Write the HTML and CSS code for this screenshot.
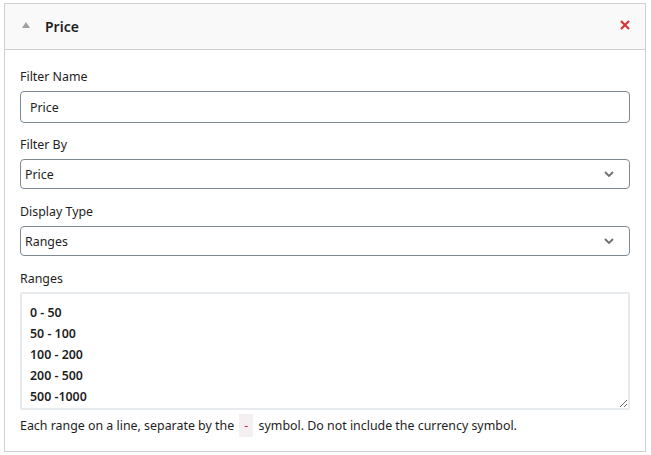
FILE: index.html
```html
<!DOCTYPE html>
<html lang="en">
<head>
    <meta charset="UTF-8">
    <title>Price filter</title>
    <link rel="stylesheet" href="styles.css">
</head>
<body>
    <div class="filter-box">
        <div class="filter-head">
            <svg class="toggle" width="8" height="6" viewBox="0 0 8 6"><path d="M4 0L8 6H0z" fill="#a0a0a0"/></svg>
            <h3>Price</h3>
            <svg class="remove" width="10" height="10" viewBox="0 0 10 10"><path d="M1 1l8 8M9 1l-8 8" stroke="#d63638" stroke-width="2.2"/></svg>
        </div>
        <div class="filter-body">
            <label class="field-label">Filter Name</label>
            <input class="text-input" type="text" value="Price">

            <label class="field-label">Filter By</label>
            <div class="select-wrap">
                <select class="select-input">
                    <option>Price</option>
                </select>
                <svg class="chevron" width="10" height="6" viewBox="0 0 10 6"><path d="M1 1l4 4 4-4" fill="none" stroke="#6b6f76" stroke-width="1.8"/></svg>
            </div>

            <label class="field-label">Display Type</label>
            <div class="select-wrap">
                <select class="select-input">
                    <option>Ranges</option>
                </select>
                <svg class="chevron" width="10" height="6" viewBox="0 0 10 6"><path d="M1 1l4 4 4-4" fill="none" stroke="#6b6f76" stroke-width="1.8"/></svg>
            </div>

            <label class="field-label ranges-label">Ranges</label>
            <textarea class="ranges">0 - 50
50 - 100
100 - 200
200 - 500
500 -1000</textarea>
            <p class="help">Each range on a line, separate by the <code>-</code> symbol. Do not include the currency symbol.</p>
        </div>
    </div>
</body>
</html>
```

FILE: styles.css
```css
body {
    margin: 0;
    padding: 3px 5px 0 4px;
    background: #fff;
    font-family: "Noto Sans", "Open Sans", sans-serif;
    font-size: 12.4px;
    color: #1e1e1e;
}
.filter-box {
    border: 1px solid #d0d0d0;
    height: 449px;
    box-sizing: border-box;
}
.filter-head {
    display: flex;
    align-items: center;
    height: 45px;
    background: #f9f9f9;
    border-bottom: 1px solid #d0d0d0;
    padding: 0 15px 0 17px;
}
.toggle {
    margin-right: 15px;
    margin-top: -4px;
}
.filter-head h3 {
    flex-grow: 1;
    margin: 0;
    font-size: 14px;
    font-weight: 600;
}
.remove {
    margin-top: -4px;
}
.filter-body {
    padding: 18px 15px 0 15px;
}
.field-label {
    display: block;
    line-height: 18px;
    margin-bottom: 5px;
}
.ranges-label {
    margin-bottom: 4px;
}
.text-input, .select-input {
    display: block;
    width: 100%;
    box-sizing: border-box;
    height: 32px;
    border: 1px solid #7e8993;
    border-radius: 4px;
    font-family: inherit;
    font-size: 12.4px;
    color: #1e1e1e;
    background: #fff;
    margin: 0 0 13px 0;
}
.text-input {
    padding: 0 9px;
}
.select-wrap {
    position: relative;
}
.select-input {
    appearance: none;
    padding: 0 4px;
    height: 30px;
    margin-bottom: 14px;
}
.chevron {
    position: absolute;
    right: 16px;
    top: 12px;
}
.ranges {
    display: block;
    width: 100%;
    box-sizing: border-box;
    height: 118px;
    border: 2px solid #e8ebee;
    border-radius: 2px;
    padding: 8px 8px;
    font-family: inherit;
    font-size: 12.4px;
    font-weight: 600;
    line-height: 21px;
    color: #1e1e1e;
    resize: vertical;
}
.help {
    margin: 7px 0 0 0;
    line-height: 18px;
}
.help code {
    font-family: inherit;
    color: #c7254e;
    background: #f6eff1;
    padding: 3px 5px;
    margin: 0 2px;
}
```
